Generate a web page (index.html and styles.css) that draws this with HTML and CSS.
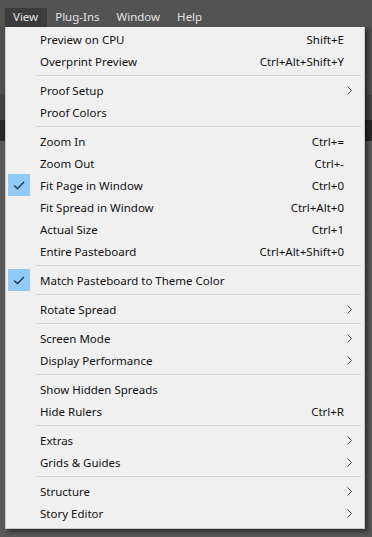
FILE: index.html
```html
<!DOCTYPE html>
<html lang="en">
<head>
  <meta charset="UTF-8" />
  <meta name="viewport" content="width=device-width, initial-scale=1.0" />
  <title>View Menu</title>
  <link rel="stylesheet" href="styles.css">
</head>
<body>
  <div class="menubar">
    <span class="menubar-item active">View</span>
    <span class="menubar-item">Plug-Ins</span>
    <span class="menubar-item">Window</span>
    <span class="menubar-item">Help</span>
  </div>

  <div class="workspace">
    <div class="band control"></div>
    <div class="band options"></div>
    <div class="band tabs"></div>
    <div class="band canvas"></div>
  </div>

  <div class="menu">
    <div class="row"><span class="check"></span><span class="label">Preview on CPU</span><span class="key">Shift+E</span><span class="sub"></span></div>
    <div class="row"><span class="check"></span><span class="label">Overprint Preview</span><span class="key">Ctrl+Alt+Shift+Y</span><span class="sub"></span></div>
    <div class="sep"></div>
    <div class="row"><span class="check"></span><span class="label">Proof Setup</span><span class="key"></span><span class="sub"><svg width="5" height="9" viewBox="0 0 5 9"><path d="M0.5 0.5 L4.5 4.5 L0.5 8.5" /></svg></span></div>
    <div class="row"><span class="check"></span><span class="label">Proof Colors</span><span class="key"></span><span class="sub"></span></div>
    <div class="sep"></div>
    <div class="row"><span class="check"></span><span class="label">Zoom In</span><span class="key">Ctrl+=</span><span class="sub"></span></div>
    <div class="row"><span class="check"></span><span class="label">Zoom Out</span><span class="key">Ctrl+-</span><span class="sub"></span></div>
    <div class="row"><span class="check on"><svg width="12" height="9" viewBox="0 0 12 9"><path d="M1 4.5 L4.5 7.5 L11 1" /></svg></span><span class="label">Fit Page in Window</span><span class="key">Ctrl+0</span><span class="sub"></span></div>
    <div class="row"><span class="check"></span><span class="label">Fit Spread in Window</span><span class="key">Ctrl+Alt+0</span><span class="sub"></span></div>
    <div class="row"><span class="check"></span><span class="label">Actual Size</span><span class="key">Ctrl+1</span><span class="sub"></span></div>
    <div class="row"><span class="check"></span><span class="label">Entire Pasteboard</span><span class="key">Ctrl+Alt+Shift+0</span><span class="sub"></span></div>
    <div class="sep"></div>
    <div class="row"><span class="check on"><svg width="12" height="9" viewBox="0 0 12 9"><path d="M1 4.5 L4.5 7.5 L11 1" /></svg></span><span class="label">Match Pasteboard to Theme Color</span><span class="key"></span><span class="sub"></span></div>
    <div class="sep"></div>
    <div class="row"><span class="check"></span><span class="label">Rotate Spread</span><span class="key"></span><span class="sub"><svg width="5" height="9" viewBox="0 0 5 9"><path d="M0.5 0.5 L4.5 4.5 L0.5 8.5" /></svg></span></div>
    <div class="sep"></div>
    <div class="row"><span class="check"></span><span class="label">Screen Mode</span><span class="key"></span><span class="sub"><svg width="5" height="9" viewBox="0 0 5 9"><path d="M0.5 0.5 L4.5 4.5 L0.5 8.5" /></svg></span></div>
    <div class="row"><span class="check"></span><span class="label">Display Performance</span><span class="key"></span><span class="sub"><svg width="5" height="9" viewBox="0 0 5 9"><path d="M0.5 0.5 L4.5 4.5 L0.5 8.5" /></svg></span></div>
    <div class="sep"></div>
    <div class="row"><span class="check"></span><span class="label">Show Hidden Spreads</span><span class="key"></span><span class="sub"></span></div>
    <div class="row"><span class="check"></span><span class="label">Hide Rulers</span><span class="key">Ctrl+R</span><span class="sub"></span></div>
    <div class="sep"></div>
    <div class="row"><span class="check"></span><span class="label">Extras</span><span class="key"></span><span class="sub"><svg width="5" height="9" viewBox="0 0 5 9"><path d="M0.5 0.5 L4.5 4.5 L0.5 8.5" /></svg></span></div>
    <div class="row"><span class="check"></span><span class="label">Grids &amp; Guides</span><span class="key"></span><span class="sub"><svg width="5" height="9" viewBox="0 0 5 9"><path d="M0.5 0.5 L4.5 4.5 L0.5 8.5" /></svg></span></div>
    <div class="sep"></div>
    <div class="row"><span class="check"></span><span class="label">Structure</span><span class="key"></span><span class="sub"><svg width="5" height="9" viewBox="0 0 5 9"><path d="M0.5 0.5 L4.5 4.5 L0.5 8.5" /></svg></span></div>
    <div class="row"><span class="check"></span><span class="label">Story Editor</span><span class="key"></span><span class="sub"><svg width="5" height="9" viewBox="0 0 5 9"><path d="M0.5 0.5 L4.5 4.5 L0.5 8.5" /></svg></span></div>
  </div>
</body>
</html>
```

FILE: styles.css
```css
* {
  margin: 0;
  padding: 0;
  box-sizing: border-box;
  font-family: "Segoe UI", "Noto Sans", sans-serif;
}

body {
  width: 372px;
  height: 537px;
  overflow: hidden;
  background: #575757;
  position: relative;
}

.menubar {
  height: 27px;
  background: #535353;
  display: flex;
  align-items: flex-end;
  padding-left: 5px;
}

.menubar-item {
  height: 19px;
  line-height: 18px;
  padding: 0 9px 0 8px;
  font-size: 11.5px;
  color: #e2e2e2;
}

.menubar-item.active {
  background: #3c3c3c;
}

.workspace {
  display: flex;
  flex-direction: column;
}

.band.control {
  height: 68px;
  background: #4d4d4d;
}

.band.options {
  height: 25px;
  background: #424242;
}

.band.tabs {
  height: 21px;
  background: #272727;
}

.band.canvas {
  height: 396px;
  background: #585858;
}

.menu {
  position: absolute;
  left: 5px;
  top: 27px;
  width: 360px;
  padding: 1px 0 4px 0;
  background: #f0f0f0;
  border: 1px solid #c8c8c8;
  border-top: none;
  box-shadow: 3px 3px 4px rgba(0, 0, 0, 0.45);
  color: #111;
  font-size: 11.5px;
}

.row {
  height: 22px;
  display: grid;
  grid-template-columns: 34px 1fr auto 20px;
  align-items: center;
}

.check {
  width: 22px;
  height: 22px;
  margin-left: 2px;
  display: flex;
  align-items: center;
  justify-content: center;
}

.check.on {
  background: #91c9f7;
}

.check svg path {
  fill: none;
  stroke: #1d3550;
  stroke-width: 1.4;
}

.label {
  white-space: nowrap;
}

.key {
  text-align: right;
  white-space: nowrap;
}

.sub {
  display: flex;
  align-items: center;
  justify-content: flex-end;
  padding-right: 12px;
}

.sub svg path {
  fill: none;
  stroke: #444;
  stroke-width: 1;
}

.sep {
  height: 7px;
  margin: 0 3px 0 30px;
  display: flex;
  align-items: center;
}

.sep::before {
  content: "";
  flex: 1;
  height: 1px;
  background: #d5d5d5;
}
```
